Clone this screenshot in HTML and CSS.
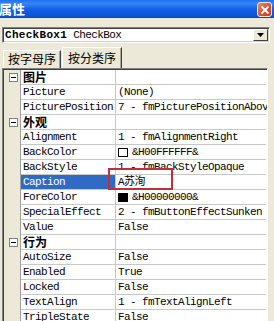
FILE: index.html
```html
<!DOCTYPE html>
<html lang="zh-CN">

<head>
    <meta charset="UTF-8">
    <title>属性</title>
    <link rel="stylesheet" href="styles.css">
</head>

<body>
    <div class="titlebar">
        <span class="title">属性</span>
        <span class="close">
            <svg width="10" height="10" viewBox="0 0 10 10">
                <path d="M1.5 1.5 L8.5 8.5 M8.5 1.5 L1.5 8.5" stroke="#fff" stroke-width="1.8" />
            </svg>
        </span>
    </div>
    <div class="panel">
        <div class="combo">
            <span class="combo-text"><b>CheckBox1</b> CheckBox</span>
            <span class="combo-btn">
                <svg width="7" height="4" viewBox="0 0 7 4"><path d="M0 0 H7 L3.5 4 Z" fill="#000" /></svg>
            </span>
        </div>
        <div class="tabs">
            <div class="tab">按字母序</div>
            <div class="tab active">按分类序</div>
        </div>
        <div class="grid">
            <div class="row cat">
                <div class="gutter"><span class="toggle"></span></div>
                <div class="name">图片</div>
                <div class="value"></div>
            </div>
            <div class="row">
                <div class="gutter"></div>
                <div class="name">Picture</div>
                <div class="value">(None)</div>
            </div>
            <div class="row">
                <div class="gutter"></div>
                <div class="name">PicturePosition</div>
                <div class="value">7 - fmPicturePositionAboveCenter</div>
            </div>
            <div class="row cat">
                <div class="gutter"><span class="toggle"></span></div>
                <div class="name">外观</div>
                <div class="value"></div>
            </div>
            <div class="row">
                <div class="gutter"></div>
                <div class="name">Alignment</div>
                <div class="value">1 - fmAlignmentRight</div>
            </div>
            <div class="row">
                <div class="gutter"></div>
                <div class="name">BackColor</div>
                <div class="value"><span class="swatch white"></span>&amp;H00FFFFFF&amp;</div>
            </div>
            <div class="row">
                <div class="gutter"></div>
                <div class="name">BackStyle</div>
                <div class="value">1 - fmBackStyleOpaque</div>
            </div>
            <div class="row selected">
                <div class="gutter"></div>
                <div class="name">Caption</div>
                <div class="value">A苏洵<span class="mark"></span></div>
            </div>
            <div class="row">
                <div class="gutter"></div>
                <div class="name">ForeColor</div>
                <div class="value"><span class="swatch black"></span>&amp;H00000000&amp;</div>
            </div>
            <div class="row">
                <div class="gutter"></div>
                <div class="name">SpecialEffect</div>
                <div class="value">2 - fmButtonEffectSunken</div>
            </div>
            <div class="row">
                <div class="gutter"></div>
                <div class="name">Value</div>
                <div class="value">False</div>
            </div>
            <div class="row cat">
                <div class="gutter"><span class="toggle"></span></div>
                <div class="name">行为</div>
                <div class="value"></div>
            </div>
            <div class="row">
                <div class="gutter"></div>
                <div class="name">AutoSize</div>
                <div class="value">False</div>
            </div>
            <div class="row">
                <div class="gutter"></div>
                <div class="name">Enabled</div>
                <div class="value">True</div>
            </div>
            <div class="row">
                <div class="gutter"></div>
                <div class="name">Locked</div>
                <div class="value">False</div>
            </div>
            <div class="row">
                <div class="gutter"></div>
                <div class="name">TextAlign</div>
                <div class="value">1 - fmTextAlignLeft</div>
            </div>
            <div class="row">
                <div class="gutter"></div>
                <div class="name">TripleState</div>
                <div class="value">False</div>
            </div>
        </div>
    </div>
</body>

</html>
```

FILE: styles.css
```css
body {
    margin: 0;
    width: 274px;
    height: 321px;
    overflow: hidden;
    background-color: #ece9d8;
    font-family: "Liberation Mono", "Noto Sans CJK SC", monospace;
}

.titlebar {
    height: 18px;
    display: flex;
    justify-content: space-between;
    background: linear-gradient(#2170ee 0%, #3585f6 20%, #1560e4 50%, #0a56db 85%, #0647c2 100%);
}

.title {
    color: white;
    font-family: "Noto Sans CJK SC", sans-serif;
    font-weight: bold;
    font-size: 13px;
    line-height: 17px;
    margin-left: -1px;
}

.close {
    align-self: flex-end;
    width: 13px;
    height: 13px;
    margin: 0 2px 1px 0;
    display: flex;
    align-items: center;
    justify-content: center;
    border: 1px solid #f4e6e0;
    border-radius: 3px;
    background: linear-gradient(135deg, #e98a6c, #d4502e 60%, #c0401f);
}

.panel {
    padding: 9px 0 0 2px;
}

.combo {
    width: 268px;
    height: 16px;
    box-sizing: border-box;
    display: flex;
    align-items: center;
    justify-content: space-between;
    background-color: white;
    border: 1px solid;
    border-color: #808080 #ffffff #ffffff #808080;
    box-shadow: inset 1px 1px #404040, inset -1px -1px #d4d0c8;
}

.combo-text {
    padding-left: 2px;
    font-size: 11px;
    letter-spacing: -0.6px;
    line-height: 14px;
}

.combo-text b {
    letter-spacing: 0.3px;
}

.combo-btn {
    width: 15px;
    height: 12px;
    box-sizing: border-box;
    margin-right: 1px;
    display: flex;
    align-items: center;
    justify-content: center;
    background-color: #ece9d8;
    border: 1px solid;
    border-color: #ffffff #404040 #404040 #ffffff;
}

.tabs {
    display: flex;
    align-items: flex-end;
    height: 22px;
    margin-top: 3px;
    padding-left: 1px;
}

.tab {
    width: 58px;
    height: 18px;
    box-sizing: border-box;
    text-align: center;
    font-family: "Noto Sans CJK SC", sans-serif;
    font-size: 12px;
    line-height: 16px;
    border: 1px solid;
    border-bottom: none;
    border-color: #ffffff #404040 #ffffff #ffffff;
    box-shadow: inset -1px 0 #aca899;
}

.tab.active {
    width: 60px;
    height: 21px;
    margin-left: 1px;
    line-height: 19px;
}

.grid {
    width: 266px;
    height: 260px;
    box-sizing: border-box;
    overflow: hidden;
    background-color: white;
    border: 1px solid;
    border-color: #808080 #ffffff #ffffff #808080;
    box-shadow: inset 1px 1px #404040;
    padding: 1px 0 0 1px;
}

.row {
    display: grid;
    grid-template-columns: 17px 95px 150px;
    height: 15px;
    font-size: 11px;
    letter-spacing: -0.6px;
    line-height: 14px;
}

.gutter {
    background-color: #ece9d8;
    border-right: 1px solid #a0a0a0;
    display: flex;
    align-items: center;
}

.toggle {
    position: relative;
    width: 9px;
    height: 9px;
    box-sizing: border-box;
    margin-left: 5px;
    background-color: white;
    border: 1px solid #808080;
}

.toggle::after {
    content: "";
    position: absolute;
    left: 1px;
    top: 3px;
    width: 5px;
    height: 1px;
    background-color: black;
}

.name,
.value {
    border-bottom: 1px solid #c8c8c8;
    white-space: nowrap;
}

.name {
    border-right: 1px solid #c8c8c8;
    padding-left: 2px;
    display: flex;
    align-items: center;
}

.value {
    position: relative;
    padding-left: 2px;
    display: flex;
    align-items: center;
}

.cat .name {
    font-family: "Noto Sans CJK SC", sans-serif;
    font-weight: bold;
    font-size: 12px;
    letter-spacing: 0;
}

.selected .name {
    background-color: #316ac5;
    color: white;
}

.swatch {
    width: 10px;
    height: 9px;
    box-sizing: border-box;
    margin-right: 4px;
    border: 1px solid black;
}

.swatch.white {
    background-color: white;
}

.swatch.black {
    background-color: black;
}

.mark {
    position: absolute;
    left: -8px;
    top: -7px;
    width: 65px;
    height: 22px;
    box-sizing: border-box;
    border: 2px solid #c0303a;
}
```
